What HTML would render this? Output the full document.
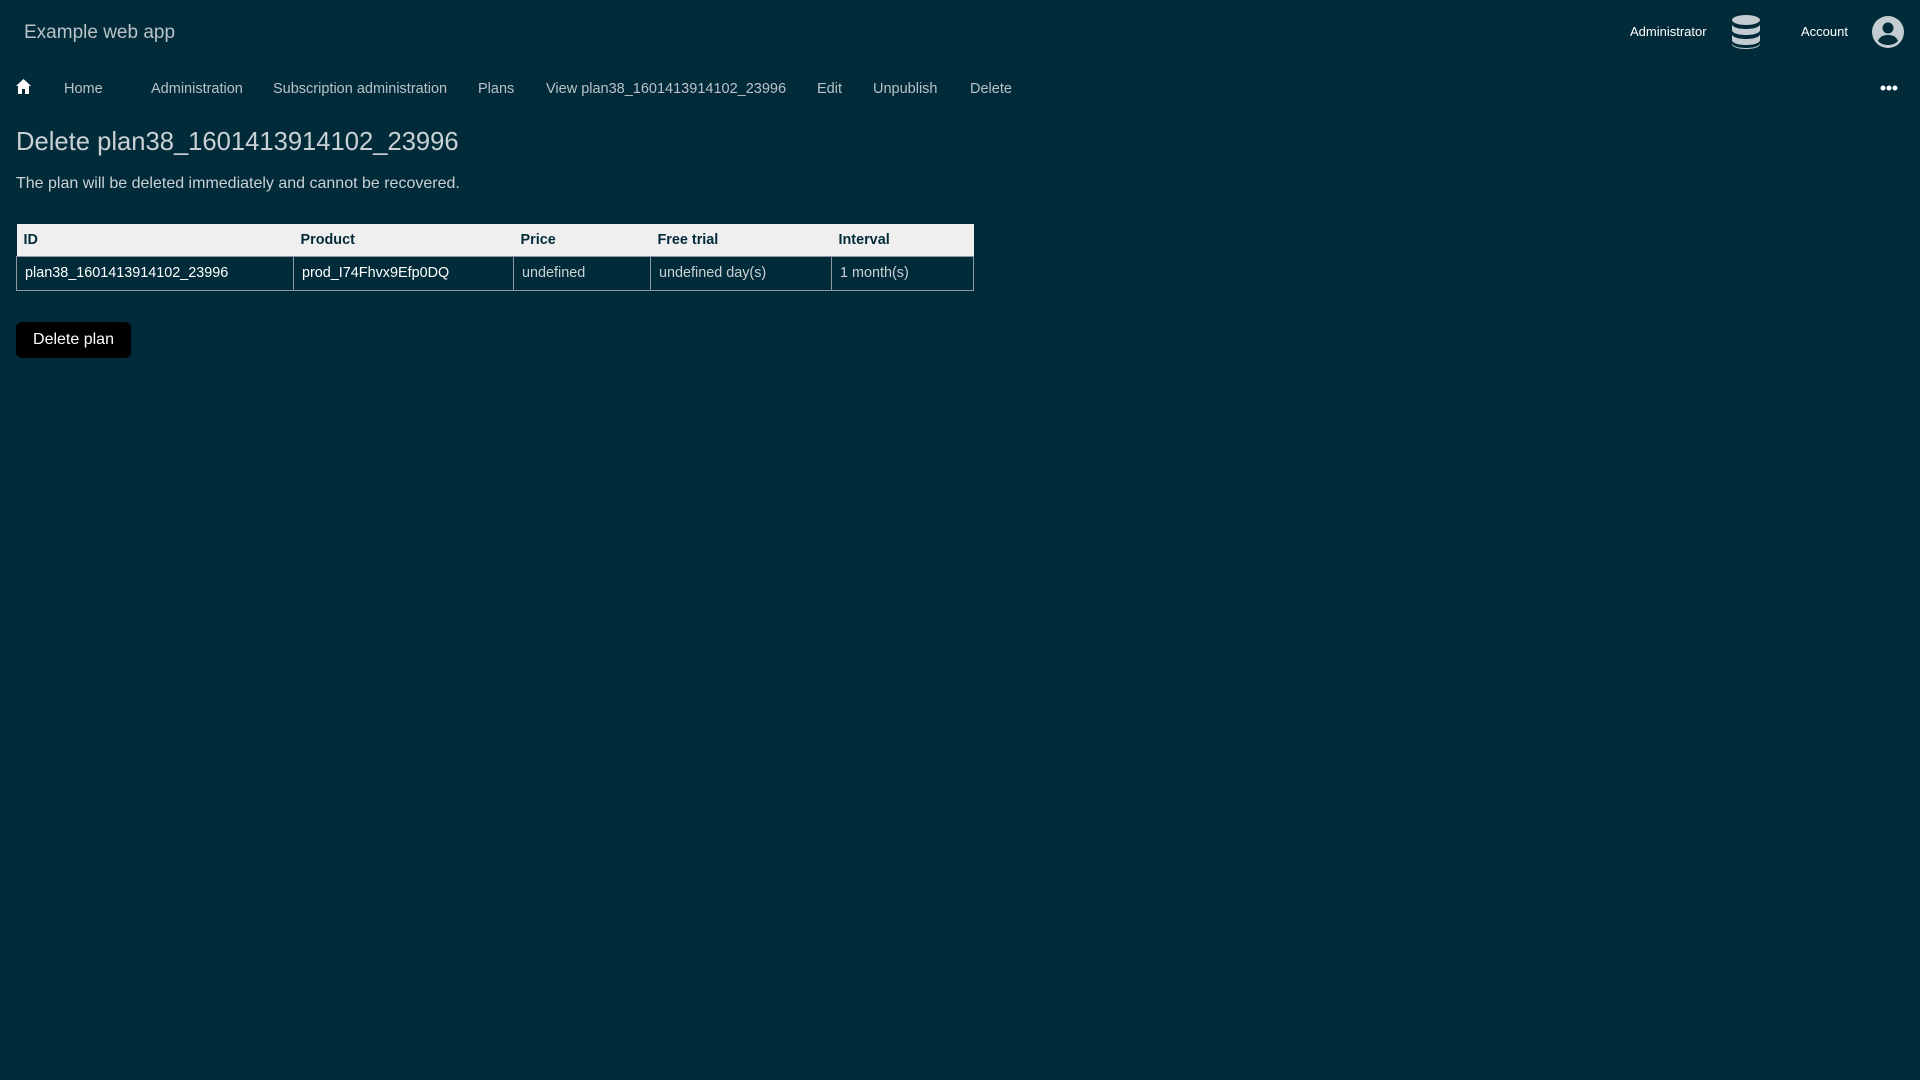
<!DOCTYPE html>
<html><head><meta charset="utf-8"><style>
*{margin:0;padding:0;box-sizing:border-box}
body{width:1920px;height:1080px;background:#022b3a;font-family:"Liberation Sans",Arial,sans-serif;color:#c9d1d5;position:relative;overflow:hidden}
.abs{position:absolute;white-space:nowrap}
.nav{top:81px;font-size:14.5px;color:#b8c2c7}
table{position:absolute;left:16px;top:224px;border-collapse:collapse;font-size:14.4px}
th{background:#efefef;color:#022b3a;text-align:left;height:32px;padding:0 7px;font-weight:bold}
td{height:34px;padding:0 8px;border:1px solid #8a9aa0;color:#c9d1d5}
td.w{color:#fff}
.btn{left:16px;top:322px;width:115px;height:36px;background:#000;border-radius:6px;color:#fff;font-size:16px;line-height:36px;text-align:center}
</style></head><body>
<div class="abs" style="left:24px;top:22px;font-size:19px;color:#b8c2c7">Example web app</div>
<div class="abs" style="left:1630px;top:24px;font-size:13px;color:#fff">Administrator</div>
<svg class="abs" style="left:1731px;top:15px" width="30" height="34" viewBox="0 0 30 34"><g fill="#c3ccd0"><ellipse cx="15" cy="5" rx="14" ry="5"/><path d="M1 9c0 3 6 5 14 5s14-2 14-5v6c0 3-6 5-14 5S1 18 1 15z"/><path d="M1 19c0 3 6 5 14 5s14-2 14-5v6c0 3-6 5-14 5S1 28 1 25z"/><path d="M1 28c0 3 6 5 14 5s14-2 14-5v1c0 3-6 5-14 5S1 32 1 29z"/></g></svg>
<div class="abs" style="left:1801px;top:24px;font-size:13px;color:#fff">Account</div>
<svg class="abs" style="left:1872px;top:16px" width="32" height="32" viewBox="0 0 32 32"><circle cx="16" cy="16" r="16" fill="#c3ccd0"/><circle cx="16" cy="12" r="5.5" fill="#022b3a"/><path d="M6 25c2-5 6-6 10-6s8 1 10 6c-3 3-6 4-10 4s-7-1-10-4z" fill="#022b3a"/></svg>
<svg class="abs" style="left:16px;top:79px" width="15" height="15" viewBox="0 0 15 15"><path d="M7.5 0L0 7h2v8h4v-5h3v5h4V7h2z" fill="#fff"/></svg>
<div class="abs nav" style="left:64px">Home</div>
<div class="abs nav" style="left:151px">Administration</div>
<div class="abs nav" style="left:273px">Subscription administration</div>
<div class="abs nav" style="left:478px">Plans</div>
<div class="abs nav" style="left:546px">View plan38_1601413914102_23996</div>
<div class="abs nav" style="left:817px">Edit</div>
<div class="abs nav" style="left:873px">Unpublish</div>
<div class="abs nav" style="left:970px">Delete</div>
<svg class="abs" style="left:1880px;top:85px" width="18" height="6"><circle cx="3" cy="3" r="2.5" fill="#fff"/><circle cx="9" cy="3" r="2.5" fill="#fff"/><circle cx="15" cy="3" r="2.5" fill="#fff"/></svg>
<div class="abs" style="left:16px;top:128px;font-size:25.6px;color:#c9d1d5">Delete plan38_1601413914102_23996</div>
<div class="abs" style="left:16px;top:175px;font-size:16px;color:#c9d1d5">The plan will be deleted immediately and cannot be recovered.</div>
<table>
<tr><th style="width:277px">ID</th><th style="width:220px">Product</th><th style="width:137px">Price</th><th style="width:181px">Free trial</th><th style="width:142px">Interval</th></tr>
<tr><td class="w">plan38_1601413914102_23996</td><td class="w">prod_I74Fhvx9Efp0DQ</td><td>undefined</td><td>undefined day(s)</td><td>1 month(s)</td></tr>
</table>
<div class="abs btn">Delete plan</div>
</body></html>
